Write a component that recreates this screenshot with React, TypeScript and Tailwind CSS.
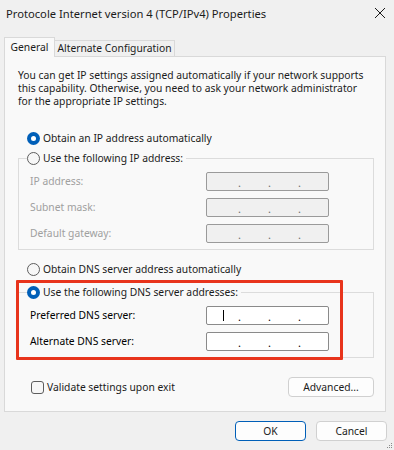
import React from 'react';

function Radio({ checked }: { checked?: boolean }) {
  return checked ? (
    <span className="w-[13px] h-[13px] rounded-full bg-[#005fb8] flex items-center justify-center shrink-0">
      <span className="w-[5px] h-[5px] rounded-full bg-white" />
    </span>
  ) : (
    <span className="w-[13px] h-[13px] rounded-full border border-[#5d5d5d] bg-[#f7f7f7] shrink-0" />
  );
}

function IpBox({ disabled, caret }: { disabled?: boolean; caret?: boolean }) {
  return (
    <div
      className={
        'w-[123px] h-[19px] rounded-[2px] border flex items-end pb-[1px] relative ' +
        (disabled ? 'bg-[#f0f0f0] border-[#9a9a9a] text-[#6d6d6d]' : 'bg-white border-[#8a8a8a] text-black')
      }
    >
      {caret && <span className="absolute left-[16px] top-[3px] w-px h-[11px] bg-black" />}
      <div className="flex pl-[31px] leading-[12px] text-[11px]">
        <span className="w-[30px]">.</span>
        <span className="w-[30px]">.</span>
        <span className="w-[30px]">.</span>
      </div>
    </div>
  );
}

function Field({ label, disabled, caret }: { label: string; disabled?: boolean; caret?: boolean }) {
  return (
    <div className="flex items-center h-[19px]">
      <span className={'w-[176px] ' + (disabled ? 'text-[#a0a0a0]' : 'text-black')}>{label}</span>
      <IpBox disabled={disabled} caret={caret} />
    </div>
  );
}

export default function App() {
  return (
    <div
      className="w-[394px] h-[450px] bg-[#f0f0f0] text-[10.3px] leading-[13px] text-[#1b1b1b] flex flex-col relative overflow-hidden"
      style={{ fontFamily: '"Noto Sans", "Open Sans", sans-serif' }}
    >
      {/* Title bar */}
      <div className="h-[27px] flex items-center justify-between pl-[6px] pr-[8px]">
        <span className="text-[11.2px]">Protocole Internet version 4 (TCP/IPv4) Properties</span>
        <svg width="12" height="12" viewBox="0 0 12 12" className="mb-[1px]">
          <path d="M1 1L11 11M11 1L1 11" stroke="#1b1b1b" strokeWidth="1" />
        </svg>
      </div>

      {/* Tabs */}
      <div className="flex items-end h-[29px] pl-[4px] relative z-10">
        <div className="h-[20px] w-[51px] border border-b-0 border-[#d9d9d9] bg-[#f9f9f9] flex items-center justify-center mb-[-1px] pb-[1px]">
          General
        </div>
        <div className="h-[16px] w-[120px] border border-l-0 border-b-0 border-[#d9d9d9] bg-[#f0f0f0] flex items-center justify-center">
          Alternate Configuration
        </div>
      </div>

      {/* Panel */}
      <div className="mx-[4px] w-[382px] border border-[#d9d9d9] bg-[#f9f9f9] pl-[13px] pr-[11px] pt-[12px] pb-[14px] relative">
        <p className="whitespace-nowrap">
          You can get IP settings assigned automatically if your network supports
          <br />
          this capability. Otherwise, you need to ask your network administrator
          <br />
          for the appropriate IP settings.
        </p>

        <div className="flex items-center gap-[3px] h-[16px] mt-[22px] ml-[9px]">
          <Radio checked />
          <span>Obtain an IP address automatically</span>
        </div>

        <fieldset className="mt-[4px] border border-[#dcdcdc] pt-[6px] pb-[6px]">
          <legend className="ml-[8px] pr-[3px] h-[16px] flex items-center gap-[3px]">
            <Radio />
            <span>Use the following IP address:</span>
          </legend>
          <div className="pl-[11px] flex flex-col gap-[7px]">
            <Field label="IP address:" disabled />
            <Field label="Subnet mask:" disabled />
            <Field label="Default gateway:" disabled />
          </div>
        </fieldset>

        <div className="flex items-center gap-[3px] h-[16px] mt-[11px] ml-[9px]">
          <Radio />
          <span>Obtain DNS server address automatically</span>
        </div>

        <fieldset className="mt-[7px] border border-[#dcdcdc] pt-[6px] pb-[6px]">
          <legend className="ml-[8px] pr-[3px] h-[16px] flex items-center gap-[3px]">
            <Radio checked />
            <span>Use the following DNS server addresses:</span>
          </legend>
          <div className="pl-[11px] flex flex-col gap-[7px]">
            <Field label="Preferred DNS server:" caret />
            <Field label="Alternate DNS server:" />
          </div>
        </fieldset>

        <div className="flex items-center justify-between mt-[19px] pl-[13px]">
          <label className="flex items-center gap-[3px]">
            <span className="w-[13px] h-[13px] rounded-[3px] border border-[#5d5d5d] bg-[#f7f7f7]" />
            <span>Validate settings upon exit</span>
          </label>
          <button className="w-[86px] h-[20px] rounded-[4px] border border-[#d0d0d0] bg-[#fdfdfd] leading-[13px]">
            Advanced...
          </button>
        </div>

        {/* Highlight annotation */}
        <div className="absolute left-[11px] top-[223px] w-[327px] h-[80px] border-[3px] border-[#e8341c] rounded-[1px] pointer-events-none" />
      </div>

      {/* Dialog buttons */}
      <div className="flex justify-end gap-[10px] pr-[7px] mt-[9px]">
        <button className="w-[71px] h-[20px] rounded-[4px] border border-[#005fb8] bg-[#fdfdfd] leading-[13px]">
          OK
        </button>
        <button className="w-[71px] h-[20px] rounded-[4px] border border-[#d0d0d0] bg-[#fdfdfd] leading-[13px]">
          Cancel
        </button>
      </div>

      {/* Resize grip */}
      <svg width="6" height="6" viewBox="0 0 6 6" className="absolute right-[1px] bottom-[1px]">
        <rect x="4" y="0" width="1" height="1" fill="#8a8a8a" />
        <rect x="2" y="2" width="1" height="1" fill="#8a8a8a" />
        <rect x="4" y="2" width="1" height="1" fill="#8a8a8a" />
        <rect x="0" y="4" width="1" height="1" fill="#8a8a8a" />
        <rect x="2" y="4" width="1" height="1" fill="#8a8a8a" />
        <rect x="4" y="4" width="1" height="1" fill="#8a8a8a" />
      </svg>
    </div>
  );
}
